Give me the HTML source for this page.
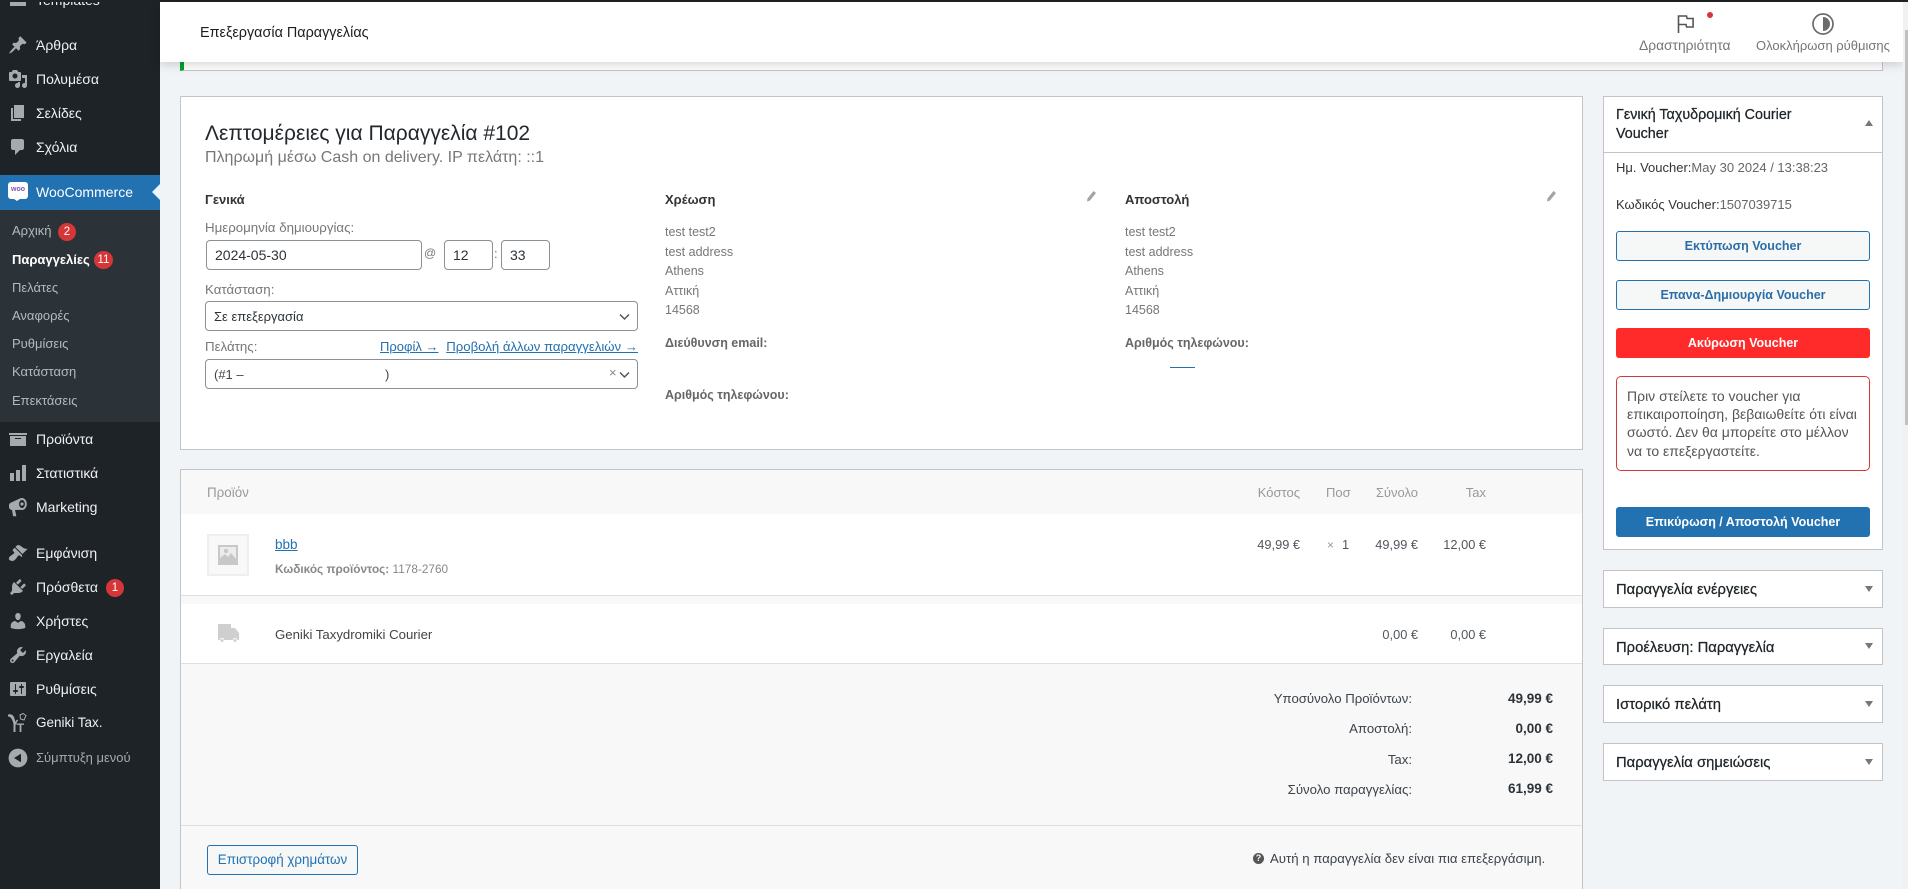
<!DOCTYPE html>
<html lang="el"><head><meta charset="utf-8"><title>Επεξεργασία Παραγγελίας</title>
<style>
html,body{margin:0;padding:0;width:1908px;height:889px;overflow:hidden;background:#f1f4f7;font-family:"Liberation Sans","DejaVu Sans",sans-serif;font-size:13px;color:#3c434a}
.a{position:absolute;box-sizing:border-box}
.t{position:absolute;white-space:nowrap;height:20px;line-height:20px}
.r{text-align:right}
.m{color:#f0f0f1;font-size:14px;left:36px}
.s{color:#b4b9be;font-size:13px;left:12px}
.ic{position:absolute;left:8px;width:20px;height:20px;fill:#a7aaad}
.b{position:absolute;background:#d63638;color:#fff;border-radius:50%;width:18px;height:18px;line-height:18px;text-align:center;font-size:11.5px}
.gl{color:#777}
.inp{position:absolute;box-sizing:border-box;background:#fff;border:1px solid #8c8f94;border-radius:4px}
.pb{position:absolute;box-sizing:border-box;left:1603px;width:280px;background:#fff;border:1px solid #c3c4c7}
.btn{position:absolute;box-sizing:border-box;left:1616px;width:254px;height:30px;line-height:29px;border:1px solid #2271b1;border-radius:3px;background:#f6f7f7;color:#2b6ea8;text-align:center;font-weight:700;font-size:12.5px}
.tri{position:absolute;left:1865px;width:0;height:0;border-left:4px solid transparent;border-right:4px solid transparent}
.lnk{color:#2271b1;text-decoration:underline}
.pbt{color:#1d2327;font-size:14.8px;-webkit-text-stroke:.25px #1d2327;left:1616px}
.v{font-weight:700;color:#2c3338;font-size:13.5px}
.p{font-size:12.8px;color:#50575e}
.n{color:#555;font-size:14px;left:1627px}
</style></head>
<body>
<!-- sidebar -->
<div class="a" style="left:0;top:0;width:160px;height:889px;background:#1d2327"></div>
<svg class="ic" style="top:-9px" viewBox="0 0 20 20"><path d="M2 3h16v12H2z"/></svg>
<div class="t m" style="top:-10px">Templates</div>
<svg class="ic" style="top:35px" viewBox="0 0 20 20"><path d="M10.44 3.02l1.82-1.82 6.36 6.35-1.83 1.82c-1.05-.68-2.48-.57-3.41.36l-.75.75c-.92.93-1.04 2.35-.35 3.41l-1.83 1.82-2.41-2.41-2.8 2.79c-.42.42-3.38 2.71-3.8 2.29s1.86-3.39 2.28-3.81l2.79-2.79L4.1 9.36l1.83-1.82c1.05.69 2.48.57 3.4-.36l.75-.75c.93-.92 1.05-2.35.36-3.41z"/></svg>
<div class="t m" style="top:35px">Άρθρα</div>
<svg class="ic" style="top:69px" viewBox="0 0 20 20"><path d="M13 11V4c0-.55-.45-1-1-1h-1.67L9 1H5L3.67 3H2c-.55 0-1 .45-1 1v7c0 .55.45 1 1 1h10c.55 0 1-.45 1-1zM7 4.5c1.38 0 2.5 1.12 2.5 2.5S8.38 9.5 7 9.5 4.5 8.38 4.5 7 5.62 4.5 7 4.5zM14 6h5v10.5c0 1.38-1.12 2.5-2.5 2.5S14 17.88 14 16.5s1.12-2.5 2.5-2.5c.17 0 .34.02.5.05V9h-3V6zm-4 8.05V13h2v3.5c0 1.38-1.12 2.5-2.5 2.5S7 17.88 7 16.5 8.12 14 9.5 14c.17 0 .34.02.5.05z"/></svg>
<div class="t m" style="top:69px">Πολυμέσα</div>
<svg class="ic" style="top:103px" viewBox="0 0 20 20"><path d="M6 15V2h10v13H6zm-1 1h8v2H3V5h2v11z"/></svg>
<div class="t m" style="top:103px">Σελίδες</div>
<svg class="ic" style="top:137px" viewBox="0 0 20 20"><path d="M5 2h9c1.1 0 2 .9 2 2v7c0 1.1-.9 2-2 2h-2l-5 5v-5H5c-1.1 0-2-.9-2-2V4c0-1.1.9-2 2-2z"/></svg>
<div class="t m" style="top:137px">Σχόλια</div>
<div class="a" style="left:0;top:175px;width:160px;height:35px;background:#2271b1"></div>
<div class="a" style="left:8px;top:182px;width:20px;height:17px;background:#fff;border-radius:3px;color:#7f54b3;font-size:7px;font-weight:700;line-height:16px;text-align:center">woo</div>
<div class="a" style="left:14px;top:199px;border-left:3px solid transparent;border-right:3px solid transparent;border-top:2px solid #fff"></div>
<div class="t m" style="top:182px;color:#fff">WooCommerce</div>
<div class="a" style="left:152px;top:184px;border-top:8px solid transparent;border-bottom:8px solid transparent;border-right:8px solid #f1f4f7"></div>
<div class="a" style="left:0;top:210px;width:160px;height:212px;background:#2c3338"></div>
<div class="t s" style="top:221px">Αρχική</div><div class="b" style="left:58px;top:223px">2</div>
<div class="t s" style="top:250px;color:#fff;font-weight:700">Παραγγελίες</div><div class="b" style="left:94px;top:251px;width:19px">11</div>
<div class="t s" style="top:278px">Πελάτες</div>
<div class="t s" style="top:306px">Αναφορές</div>
<div class="t s" style="top:334px">Ρυθμίσεις</div>
<div class="t s" style="top:362px">Κατάσταση</div>
<div class="t s" style="top:391px">Επεκτάσεις</div>
<svg class="ic" style="top:429px" viewBox="0 0 20 20"><path d="M19 4v2H1V4h18zM2 7h16v10H2V7zm11 3V9H7v1h6z"/></svg>
<div class="t m" style="top:429px">Προϊόντα</div>
<svg class="ic" style="top:463px" viewBox="0 0 20 20"><path d="M18 18V2h-4v16h4zm-6 0V7H8v11h4zm-6 0v-8H2v8h4z"/></svg>
<div class="t m" style="top:463px">Στατιστικά</div>
<svg class="ic" style="top:497px" viewBox="0 0 20 20"><path fill-rule="evenodd" d="M14 1c2.7 0 4.8 2.7 4.8 6s-2.1 6-4.8 6c-.3 0-.6 0-.8-.1L4.8 13H7l1.3 5.8c0 .3-.2.5-.5.5H5.600c-.3 0-.5-.2-.6-.5L4 13c-1.7 0-3-1.400-3-3.400V8.400c0-1.500.8-2.400 2-2.800l8.600-4C12.300 1.200 13.100 1 14 1zm0 2c-1.600 0-2.900 1.800-2.900 4s1.300 4 2.900 4 2.900-1.800 2.900-4-1.300-4-2.900-4z"/><circle cx="14" cy="7" r="1.600"/></svg>
<div class="t m" style="top:497px">Marketing</div>
<svg class="ic" style="top:543px" viewBox="0 0 20 20"><path d="M14.480 11.060L7.410 3.990l1.500-1.500c.5-.56 2.300-.47 3.510.32 1.210.8 1.430 1.280 2.910 2.100 1.180.64 2.450 1.260 4.450.85zm-.71.71L6.700 4.700 4.930 6.470c-.39.39-.39 1.020 0 1.410l1.060 1.060c.39.39.39 1.030 0 1.420-.6.6-1.430 1.110-2.210 1.690-.35.26-.7.53-1.010.84C1.430 13.230.5 15.500 1 16.500c.8 1 3 2 4.500 1.300 1.300-.6 2.400-1.900 3.200-3.100.58-.78 1.090-1.610 1.690-2.210.39-.39 1.030-.39 1.420 0l1.060 1.060c.39.39 1.020.39 1.410 0z"/></svg>
<div class="t m" style="top:543px">Εμφάνιση</div>
<svg class="ic" style="top:577px" viewBox="0 0 20 20"><path d="M13.110 4.360L9.870 7.600 8 5.730l3.240-3.240c.35-.34 1.050-.2 1.560.32.520.51.660 1.210.310 1.550zm-8 1.770l.91-1.120 9.010 9.010-1.190.84c-.71.71-2.630 1.160-3.820 1.160H6.140L4.900 17.260c-.59.59-1.540.59-2.120 0-.59-.58-.59-1.530 0-2.120l1.240-1.240v-3.880c0-1.130.4-3.190 1.090-3.890zm7.260 3.970l3.240-3.240c.34-.35 1.040-.21 1.550.31.520.51.660 1.210.310 1.550l-3.240 3.250z"/></svg>
<div class="t m" style="top:577px">Πρόσθετα</div><div class="b" style="left:106px;top:579px">1</div>
<svg class="ic" style="top:611px" viewBox="0 0 20 20"><path d="M10 9.250c-2.270 0-2.730-3.440-2.730-3.440C7 4.020 7.820 2 9.970 2c2.160 0 2.980 2.020 2.710 3.810 0 0-.41 3.440-2.680 3.440zm0 2.570L12.720 10c2.390 0 4.520 2.330 4.520 4.530v2.490s-3.650 1.130-7.240 1.130c-3.650 0-7.240-1.130-7.240-1.130v-2.490c0-2.250 1.940-4.480 4.470-4.480z"/></svg>
<div class="t m" style="top:611px">Χρήστες</div>
<svg class="ic" style="top:645px" viewBox="0 0 20 20"><path d="M16.680 9.770c-1.340 1.340-3.300 1.670-4.950.99l-5.410 6.520c-.99.99-2.590.99-3.580 0s-.99-2.590 0-3.570l6.520-5.420c-.68-1.650-.35-3.610.99-4.950 1.280-1.280 3.120-1.620 4.720-1.060l-2.890 2.890 2.820 2.820 2.860-2.870c.53 1.580.18 3.390-1.080 4.650zM3.810 16.210c.4.39 1.040.39 1.430 0 .4-.4.4-1.040 0-1.430-.39-.4-1.030-.4-1.430 0-.39.39-.39 1.030 0 1.430z"/></svg>
<div class="t m" style="top:645px">Εργαλεία</div>
<svg class="ic" style="top:679px" viewBox="0 0 20 20"><path d="M18 16V4c0-.55-.45-1-1-1H3c-.55 0-1 .45-1 1v12c0 .55.45 1 1 1h14c.55 0 1-.45 1-1zM8 11h1c.55 0 1 .45 1 1s-.45 1-1 1H8v1.500c0 .28-.22.5-.5.5s-.5-.22-.5-.5V13H6c-.55 0-1-.45-1-1s.45-1 1-1h1V5.500c0-.28.22-.5.5-.5s.5.22.5.5V11zm5-2h-1c-.55 0-1-.45-1-1s.45-1 1-1h1V5.500c0-.28.22-.5.5-.5s.5.22.5.5V7h1c.55 0 1 .45 1 1s-.45 1-1 1h-1v5.500c0 .28-.22.5-.5.5s-.5-.22-.5-.5V9z"/></svg>
<div class="t m" style="top:679px">Ρυθμίσεις</div>
<svg class="ic" style="top:713px" viewBox="0 0 20 20"><path d="M0 1.500c2.500-.8 5 .2 6 2.500l1.200 4c.2 1 .3 2.500.3 3.500V19h-2v-7c0-2-1-5-2.500-7C2.500 4 1 3.500 0 3.500z"/><path d="M7 11c0-2 .8-3.500 2.200-4.500l1 1C8.800 8.500 8.500 10 8.500 12zM9 10.500h7v1.400h-2.600V19h-1.800v-7.100H9z"/><path d="M12 2l3-1.500 3 2-2 4.500-3.500-1z" fill="none" stroke="#a7aaad"/></svg>
<div class="t m" style="top:713px;font-size:13.5px">Geniki Tax.</div>
<svg class="ic" style="top:748px" viewBox="0 0 20 20"><path d="M10 .6c-5.200 0-9.400 4.200-9.400 9.400s4.200 9.400 9.400 9.400 9.400-4.200 9.400-9.400S15.200.6 10 .6zm3 5.200v8.400L6 10z"/></svg>
<div class="t m" style="top:748px;color:#a7aaad;font-size:13px">Σύμπτυξη μενού</div>

<!-- notice strip -->
<div class="a" style="left:180px;top:40px;width:1703px;height:31px;background:#fff;border:1px solid #c3c4c7;border-left:4px solid #00a32a"></div>
<!-- header -->
<div class="a" style="left:0;top:0;width:1908px;height:2px;background:#1d2327"></div>
<div class="a" style="left:160px;top:2px;width:1743px;height:60px;background:#fff;box-shadow:0 2px 10px rgba(0,0,0,.18)"></div>
<div class="t" style="left:200px;top:23px;font-size:14.4px;color:#1e1e1e">Επεξεργασία Παραγγελίας</div>
<svg class="a" style="left:1676px;top:13px" width="20" height="22" viewBox="0 0 20 22"><path d="M2.500 20V3h8l.6 2.500h6V14h-6.500l-.6-2.500H2.500" fill="none" stroke="#555" stroke-width="1.600"/></svg>
<div class="a" style="left:1707px;top:12px;width:6px;height:6px;border-radius:50%;background:#d63638"></div>
<div class="t gl" style="left:1639px;top:36px;font-size:13.8px;color:#757575">Δραστηριότητα</div>
<svg class="a" style="left:1811px;top:12px" width="24" height="24" viewBox="0 0 24 24"><circle cx="12" cy="12" r="10" fill="none" stroke="#6b6b6b" stroke-width="1.700"/><path d="M12 5a7 7 0 0 1 0 14z" fill="#6b6b6b"/></svg>
<div class="t gl" style="left:1756px;top:36px;font-size:13px;color:#757575">Ολοκλήρωση ρύθμισης</div>
<!-- scrollbar -->
<div class="a" style="left:1903px;top:2px;width:5px;height:887px;background:#f1f1f1"></div>
<div class="a" style="left:1905px;top:30px;width:3px;height:395px;background:#c1c1c1"></div>

<!-- order data -->
<div class="a" style="left:180px;top:96px;width:1403px;height:354px;background:#fff;border:1px solid #c3c4c7"></div>
<div class="t" style="left:205px;top:124px;font-size:21px;color:#23282d">Λεπτομέρειες για Παραγγελία #102</div>
<div class="t" style="left:205px;top:148px;font-size:16px;color:#777">Πληρωμή μέσω Cash on delivery. IP πελάτη: ::1</div>
<div class="t" style="left:205px;top:190px;font-weight:700;color:#333">Γενικά</div>
<div class="t gl" style="left:205px;top:218px;font-size:13.3px">Ημερομηνία δημιουργίας:</div>
<div class="inp" style="left:206px;top:240px;width:216px;height:30px"></div>
<div class="t" style="left:215px;top:245px;font-size:14px;color:#2c3338">2024-05-30</div>
<div class="t gl" style="left:424px;top:243px;font-size:12px">@</div>
<div class="inp" style="left:444px;top:240px;width:49px;height:30px"></div>
<div class="t" style="left:453px;top:245px;font-size:14px;color:#2c3338">12</div>
<div class="t gl" style="left:494px;top:244px">:</div>
<div class="inp" style="left:501px;top:240px;width:49px;height:30px"></div>
<div class="t" style="left:510px;top:245px;font-size:14px;color:#2c3338">33</div>
<div class="t gl" style="left:205px;top:280px;font-size:13.3px">Κατάσταση:</div>
<div class="inp" style="left:205px;top:301px;width:433px;height:30px"></div>
<div class="t" style="left:214px;top:307px;color:#2c3338">Σε επεξεργασία</div>
<svg class="a" style="left:619px;top:313px" width="11" height="8" viewBox="0 0 11 8"><path d="M1 1.500l4.500 4.500 4.500-4.500" fill="none" stroke="#50575e" stroke-width="1.500"/></svg>
<div class="t gl" style="left:205px;top:337px;font-size:13.3px">Πελάτης:</div>
<div class="t lnk" style="left:380px;top:337px">Προφίλ →</div>
<div class="t lnk r" style="left:438px;width:200px;top:337px;font-size:13.2px">Προβολή άλλων παραγγελιών →</div>
<div class="inp" style="left:205px;top:359px;width:433px;height:30px"></div>
<div class="t" style="left:214px;top:365px;color:#444">(#1 –</div>
<div class="t" style="left:385px;top:365px;color:#444">)</div>
<div class="t" style="left:609px;top:363px;color:#888;font-size:13px">×</div>
<svg class="a" style="left:619px;top:371px" width="11" height="8" viewBox="0 0 11 8"><path d="M1 1.500l4.500 4.500 4.500-4.500" fill="none" stroke="#50575e" stroke-width="1.500"/></svg>

<div class="t" style="left:665px;top:190px;font-weight:700;color:#333">Χρέωση</div>
<svg class="a" style="left:1086px;top:190px" width="11" height="12" viewBox="0 0 11 12"><path d="M7.500 1l2.500 2-6 7.500-3 1 .5-3z" fill="#a0a3a7"/></svg>
<div class="t gl" style="left:665px;top:222px;font-size:12.500px">test test2</div>
<div class="t gl" style="left:665px;top:242px;font-size:12.500px">test address</div>
<div class="t gl" style="left:665px;top:261px;font-size:12.500px">Athens</div>
<div class="t gl" style="left:665px;top:281px;font-size:12.500px">Αττική</div>
<div class="t gl" style="left:665px;top:300px;font-size:12.500px">14568</div>
<div class="t" style="left:665px;top:333px;font-weight:700;font-size:12.500px;color:#666">Διεύθυνση email:</div>
<div class="t" style="left:665px;top:385px;font-weight:700;font-size:12.500px;color:#666">Αριθμός τηλεφώνου:</div>

<div class="t" style="left:1125px;top:190px;font-weight:700;color:#333">Αποστολή</div>
<svg class="a" style="left:1546px;top:190px" width="11" height="12" viewBox="0 0 11 12"><path d="M7.500 1l2.500 2-6 7.500-3 1 .5-3z" fill="#a0a3a7"/></svg>
<div class="t gl" style="left:1125px;top:222px;font-size:12.500px">test test2</div>
<div class="t gl" style="left:1125px;top:242px;font-size:12.500px">test address</div>
<div class="t gl" style="left:1125px;top:261px;font-size:12.500px">Athens</div>
<div class="t gl" style="left:1125px;top:281px;font-size:12.500px">Αττική</div>
<div class="t gl" style="left:1125px;top:300px;font-size:12.500px">14568</div>
<div class="t" style="left:1125px;top:333px;font-weight:700;font-size:12.500px;color:#666">Αριθμός τηλεφώνου:</div>
<div class="a" style="left:1170px;top:367px;width:25px;height:1px;background:#2271b1"></div>

<!-- items -->
<div class="a" style="left:180px;top:469px;width:1403px;height:420px;background:#f8f8f8;border:1px solid #c3c4c7;border-bottom:0"></div>
<div class="a" style="left:181px;top:514px;width:1401px;height:81px;background:#fff"></div>
<div class="a" style="left:181px;top:595px;width:1401px;height:1px;background:#dfdfdf"></div>
<div class="a" style="left:181px;top:604px;width:1401px;height:59px;background:#fff"></div>
<div class="a" style="left:181px;top:663px;width:1401px;height:1px;background:#dfdfdf"></div>
<div class="a" style="left:181px;top:825px;width:1401px;height:1px;background:#dfdfdf"></div>
<div class="t" style="left:207px;top:483px;color:#999;font-size:13.4px">Προϊόν</div>
<div class="t r" style="left:1200px;width:100px;top:483px;color:#999">Κόστος</div>
<div class="t" style="left:1326px;top:483px;color:#999">Ποσ</div>
<div class="t r" style="left:1318px;width:100px;top:483px;color:#999">Σύνολο</div>
<div class="t r" style="left:1386px;width:100px;top:483px;color:#999">Tax</div>
<div class="a" style="left:207px;top:534px;width:42px;height:42px;background:#f8f8f8;border:2px solid #eee"></div>
<svg class="a" style="left:218px;top:545px" width="20" height="20" viewBox="0 0 20 20"><path fill="#c8c8c8" d="M0 0h20v20H0z"/><path fill="#ececec" d="M2 2v11l5-4 3 3 3-4 5 6V2z"/><circle cx="8" cy="6" r="2.200" fill="#c8c8c8"/></svg>
<div class="t lnk" style="left:275px;top:535px;font-size:13.5px">bbb</div>
<div class="t" style="left:275px;top:559px;font-size:11.800px;color:#888"><b>Κωδικός προϊόντος:</b> 1178-2760</div>
<div class="t r p" style="left:1200px;width:100px;top:535px">49,99 €</div>
<div class="t" style="left:1327px;top:535px;color:#999;font-size:12px">×</div>
<div class="t p" style="left:1342px;top:535px">1</div>
<div class="t r p" style="left:1318px;width:100px;top:535px">49,99 €</div>
<div class="t r p" style="left:1386px;width:100px;top:535px">12,00 €</div>
<svg class="a" style="left:218px;top:623px" width="21" height="20" viewBox="0 0 21 20"><path fill="#cfcfcf" d="M0 1h13v4h4l4 5v7h-2a2 2 0 0 0-4 0H6a2 2 0 0 0-4 0H0z"/><circle cx="4" cy="17.500" r="1.500" fill="#cfcfcf"/><circle cx="17" cy="17.500" r="1.500" fill="#cfcfcf"/></svg>
<div class="t" style="left:275px;top:625px;font-size:13.2px;color:#444">Geniki Taxydromiki Courier</div>
<div class="t r p" style="left:1318px;width:100px;top:625px">0,00 €</div>
<div class="t r p" style="left:1386px;width:100px;top:625px">0,00 €</div>
<div class="t r" style="left:1212px;width:200px;top:689px;font-size:13.2px">Υποσύνολο Προϊόντων:</div>
<div class="t r" style="left:1212px;width:200px;top:719px;font-size:13.2px">Αποστολή:</div>
<div class="t r" style="left:1212px;width:200px;top:750px;font-size:13.2px">Tax:</div>
<div class="t r" style="left:1212px;width:200px;top:780px;font-size:13.2px">Σύνολο παραγγελίας:</div>
<div class="t r v" style="left:1453px;width:100px;top:689px">49,99 €</div>
<div class="t r v" style="left:1453px;width:100px;top:719px">0,00 €</div>
<div class="t r v" style="left:1453px;width:100px;top:749px">12,00 €</div>
<div class="t r v" style="left:1453px;width:100px;top:779px">61,99 €</div>
<div class="a" style="left:207px;top:845px;width:151px;height:30px;border:1px solid #2271b1;border-radius:3px;background:#f6f7f7;color:#2271b1;text-align:center;line-height:28px;font-size:13.4px">Επιστροφή χρημάτων</div>
<div class="a" style="left:1253px;top:853px;width:11px;height:11px;border-radius:50%;background:#555;color:#f8f8f8;font-size:9px;font-weight:700;line-height:11px;text-align:center">?</div>
<div class="t" style="left:1270px;top:849px;font-size:13.2px">Αυτή η παραγγελία δεν είναι πια επεξεργάσιμη.</div>

<!-- right column -->
<div class="pb" style="top:96px;height:454px"></div>
<div class="a" style="left:1604px;top:152px;width:278px;height:1px;background:#c3c4c7"></div>
<div class="t pbt" style="top:105px;font-size:14.3px">Γενική Ταχυδρομική Courier</div>
<div class="t pbt" style="top:124px;font-size:14.3px">Voucher</div>
<div class="tri" style="top:120px;border-bottom:6px solid #777"></div>
<div class="t" style="left:1616px;top:158px;color:#666"><span style="color:#333">Ημ. Voucher:</span>May 30 2024 / 13:38:23</div>
<div class="t" style="left:1616px;top:195px;color:#666"><span style="color:#333">Κωδικός Voucher:</span>1507039715</div>
<div class="btn" style="top:231px">Εκτύπωση Voucher</div>
<div class="btn" style="top:280px">Επανα-Δημιουργία Voucher</div>
<div class="btn" style="top:328px;background:#ff2a2a;border-color:#ff2a2a;color:#fff">Ακύρωση Voucher</div>
<div class="a" style="left:1616px;top:376px;width:254px;height:95px;border:1px solid #d63638;border-radius:5px"></div>
<div class="t n" style="top:386px">Πριν στείλετε το voucher για</div>
<div class="t n" style="top:404px">επικαιροποίηση, βεβαιωθείτε ότι είναι</div>
<div class="t n" style="top:422px">σωστό. Δεν θα μπορείτε στο μέλλον</div>
<div class="t n" style="top:441px">να το επεξεργαστείτε.</div>
<div class="btn" style="top:507px;background:#2271b1;color:#fff">Επικύρωση / Αποστολή Voucher</div>
<div class="pb" style="top:570px;height:38px"></div>
<div class="t pbt" style="top:580px">Παραγγελία ενέργειες</div>
<div class="tri" style="top:586px;border-top:6px solid #777"></div>
<div class="pb" style="top:628px;height:37px"></div>
<div class="t pbt" style="top:638px">Προέλευση: Παραγγελία</div>
<div class="tri" style="top:643px;border-top:6px solid #777"></div>
<div class="pb" style="top:685px;height:38px"></div>
<div class="t pbt" style="top:695px">Ιστορικό πελάτη</div>
<div class="tri" style="top:701px;border-top:6px solid #777"></div>
<div class="pb" style="top:743px;height:38px"></div>
<div class="t pbt" style="top:753px">Παραγγελία σημειώσεις</div>
<div class="tri" style="top:759px;border-top:6px solid #777"></div>
</body></html>
